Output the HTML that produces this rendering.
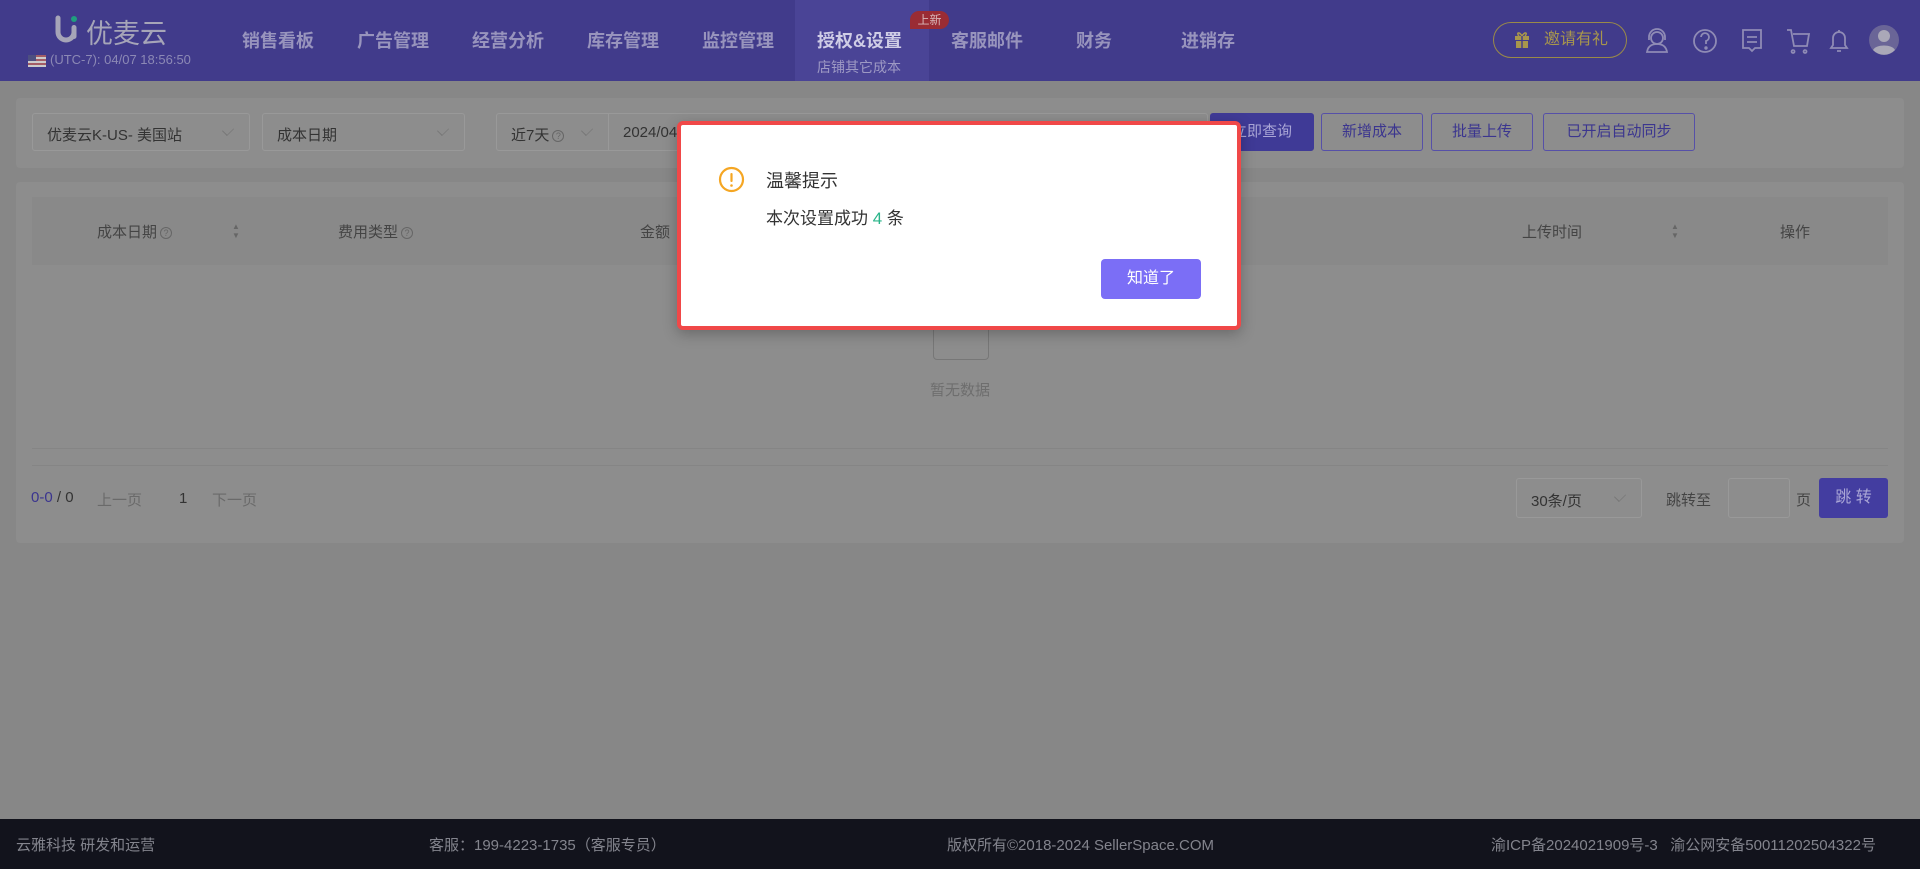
<!DOCTYPE html>
<html><head><meta charset="utf-8"><style>
*{box-sizing:border-box;margin:0;padding:0}
body{width:1920px;height:869px;overflow:hidden;background:#878787;font-family:"Liberation Sans","Noto Sans CJK SC",sans-serif;position:relative;color:#3a3a3a}
.abs{position:absolute}
.hdr{left:0;top:0;width:1920px;height:81px;background:#413b8b}
.nav{top:27px;font-size:18px;font-weight:bold;color:#9894bd;white-space:nowrap}
.card{background:#8d8d8d;border-radius:4px}
.sel{border:1px solid #999;border-radius:3px;height:38px;top:113px;font-size:15px;color:#333;padding:10px 14px 0;background:#8d8d8d}
.chev{position:absolute;right:16px;top:11px;width:10px;height:10px;border-right:1px solid #777;border-bottom:1px solid #777;transform:rotate(45deg) scaleX(.7)}
.btn{top:113px;height:38px;border:1px solid #5650a8;border-radius:3px;color:#3b358f;font-size:15px;text-align:center;line-height:36px}
.th{top:221px;font-size:15px;color:#444}
.q{display:inline-block;width:12px;height:12px;border:1px solid #666;border-radius:50%;font-size:9px;line-height:10px;text-align:center;color:#666;vertical-align:1px;margin-left:3px}
.ft{top:834px;font-size:15px;color:#83848d;white-space:nowrap}
</style></head><body>
<div class="abs hdr"></div>
<svg class="abs" style="left:54px;top:14px" width="28" height="30" viewBox="0 0 28 30"><path d="M4 4 V18 a8 8 0 0 0 16 0" stroke="#a6a5b8" stroke-width="5" fill="none" stroke-linecap="round"/><rect x="17.5" y="11" width="5" height="14" rx="2.5" fill="#a6a5b8"/><circle cx="20" cy="5" r="3" fill="#1f9e7e"/></svg>
<div class="abs" style="left:86px;top:12px;font-size:27px;color:#a6a5b8">优麦云</div>
<div class="abs" style="left:28px;top:55px;width:18px;height:12px;background:repeating-linear-gradient(#a35c66 0 2px,#ccc 2px 4px)"><div style="width:8px;height:6px;background:#4d4f80"></div></div>
<div class="abs" style="left:50px;top:52px;font-size:13px;color:#8c89b5">(UTC-7): 04/07 18:56:50</div>
<div class="abs nav" style="left:242px">销售看板</div>
<div class="abs nav" style="left:357px">广告管理</div>
<div class="abs nav" style="left:472px">经营分析</div>
<div class="abs nav" style="left:587px">库存管理</div>
<div class="abs nav" style="left:702px">监控管理</div>
<div class="abs" style="left:795px;top:0;width:134px;height:81px;background:#4a4496"></div>
<div class="abs nav" style="left:817px;color:#cfcde6">授权&amp;设置</div>
<div class="abs" style="left:817px;top:57px;font-size:14px;color:#9d99c4">店铺其它成本</div>
<div class="abs" style="left:910px;top:11px;width:39px;height:18px;background:#9a2c34;border-radius:9px 9px 9px 0;color:#d9b8b8;font-size:12px;text-align:center;line-height:18px">上新</div>
<div class="abs nav" style="left:951px">客服邮件</div>
<div class="abs nav" style="left:1076px">财务</div>
<div class="abs nav" style="left:1181px">进销存</div>
<div class="abs" style="left:1493px;top:22px;width:134px;height:36px;border:1px solid #9a8a48;border-radius:18px;color:#a8964c;font-size:16px;line-height:34px;padding-left:50px">邀请有礼</div>
<svg class="abs" style="left:1514px;top:31px" width="16" height="17" viewBox="0 0 16 17"><rect x="1" y="5" width="14" height="4" fill="#a8964c"/><rect x="2" y="10" width="12" height="7" fill="#a8964c"/><path d="M8 5 C5 0 2 2 5 5 M8 5 C11 0 14 2 11 5" stroke="#a8964c" stroke-width="1.5" fill="none"/><rect x="7.3" y="5" width="1.4" height="12" fill="#413b8b"/></svg>
<svg class="abs" style="left:1643px;top:26px" width="250" height="30" viewBox="0 0 250 30" fill="none" stroke="#8f8bb5" stroke-width="1.8">
<circle cx="14" cy="12" r="6"/><path d="M6 14 V11 a8 8 0 0 1 16 0 V14 M4 26 c1-6 5-8 10-8 s9 2 10 8 z"/>
<circle cx="62" cy="15" r="11"/><path d="M58 11 a4 4 0 1 1 5 4 v3" /><circle cx="63" cy="22" r="0.8" fill="#8f8bb5"/>
<path d="M100 4 h18 v18 h-6 l-3 3 l-3-3 h-6 z M104 11 h10 M104 16 h10"/>
<path d="M144 4 h4 l3 16 h13 l2-12 h-16 M150 24 a1.5 1.5 0 1 0 .1 0 M162 24 a1.5 1.5 0 1 0 .1 0"/>
<path d="M188 22 h16 l-2-3 v-7 a6 6 0 0 0-12 0 v7 z M194 25 h4 M196 4 v2"/>
</svg>
<svg class="abs" style="left:1869px;top:25px" width="30" height="30" viewBox="0 0 30 30"><circle cx="15" cy="15" r="15" fill="#6a6597"/><circle cx="15" cy="11" r="6" fill="#aaa8b8"/><path d="M4 25 c3-6 19-6 22 0 a15 15 0 0 1 -22 0z" fill="#aaa8b8"/></svg>

<div class="abs card" style="left:16px;top:98px;width:1888px;height:70px"></div>
<div class="abs sel" style="left:32px;width:218px">优麦云K-US- 美国站<span class="chev"></span></div>
<div class="abs sel" style="left:262px;width:203px">成本日期<span class="chev"></span></div>
<div class="abs sel" style="left:496px;width:113px;border-radius:3px 0 0 3px">近7天<span class="q">?</span><span class="chev"></span></div>
<div class="abs sel" style="left:608px;width:600px;border-radius:0 3px 3px 0">2024/04</div>
<div class="abs btn" style="left:1210px;width:104px;background:#3f3a96;color:#aaa6d6;border-color:#3f3a96">立即查询</div>
<div class="abs btn" style="left:1321px;width:102px">新增成本</div>
<div class="abs btn" style="left:1431px;width:102px">批量上传</div>
<div class="abs btn" style="left:1543px;width:152px">已开启自动同步</div>

<div class="abs card" style="left:16px;top:182px;width:1888px;height:361px"></div>
<div class="abs" style="left:32px;top:197px;width:1856px;height:68px;background:#898989"></div>
<div class="abs th" style="left:97px">成本日期<span class="q">?</span></div>
<div class="abs th" style="left:338px">费用类型<span class="q">?</span></div>
<div class="abs th" style="left:640px">金额</div>
<div class="abs th" style="left:1522px">上传时间</div>
<div class="abs th" style="left:1780px">操作</div>
<div class="abs" style="left:232px;top:222px;font-size:8px;line-height:9px;color:#666">▲<br>▼</div>
<div class="abs" style="left:1671px;top:222px;font-size:8px;line-height:9px;color:#666">▲<br>▼</div>
<div class="abs" style="left:933px;top:316px;width:56px;height:44px;border:1.5px solid #777;border-radius:4px"></div>
<div class="abs" style="left:930px;top:379px;width:60px;font-size:15px;color:#6e6e6e">暂无数据</div>
<div class="abs" style="left:32px;top:448px;width:1856px;height:1px;background:#858585"></div>
<div class="abs" style="left:32px;top:465px;width:1856px;height:1px;background:#858585"></div>
<div class="abs" style="left:31px;top:489px;font-size:15px;color:#3b358f">0-0 <span style="color:#333">/ 0</span></div>
<div class="abs" style="left:97px;top:489px;font-size:15px;color:#6a6a6a">上一页</div>
<div class="abs" style="left:179px;top:490px;font-size:15px;color:#333">1</div>
<div class="abs" style="left:212px;top:489px;font-size:15px;color:#6a6a6a">下一页</div>
<div class="abs sel" style="left:1516px;top:478px;width:126px;height:40px;padding-top:11px">30条/页<span class="chev" style="top:12px"></span></div>
<div class="abs" style="left:1666px;top:489px;font-size:15px;color:#444">跳转至</div>
<div class="abs" style="left:1728px;top:478px;width:62px;height:40px;border:1px solid #999;border-radius:3px"></div>
<div class="abs" style="left:1796px;top:489px;font-size:15px;color:#444">页</div>
<div class="abs" style="left:1819px;top:478px;width:69px;height:40px;background:#433da0;border-radius:3px;color:#aaa6d6;font-size:16px;text-align:center;line-height:40px">跳 转</div>

<div class="abs" style="left:0;top:819px;width:1920px;height:50px;background:#12131c"></div>
<div class="abs ft" style="left:16px">云雅科技 研发和运营</div>
<div class="abs ft" style="left:429px">客服：199-4223-1735（客服专员）</div>
<div class="abs ft" style="left:947px">版权所有©2018-2024 SellerSpace.COM</div>
<div class="abs ft" style="left:1491px">渝ICP备2024021909号-3 &nbsp; 渝公网安备50011202504322号</div>

<div class="abs" style="left:677px;top:121px;width:564px;height:209px;background:#fff;border:4px solid #f04848;border-radius:6px;box-shadow:0 4px 14px rgba(0,0,0,.25)"></div>
<svg class="abs" style="left:718px;top:166px" width="27" height="27" viewBox="0 0 27 27"><circle cx="13.5" cy="13.5" r="11.5" fill="none" stroke="#f5a623" stroke-width="2.2"/><rect x="12.4" y="7" width="2.2" height="9" rx="1" fill="#f5a623"/><circle cx="13.5" cy="19.5" r="1.3" fill="#f5a623"/></svg>
<div class="abs" style="left:766px;top:167px;font-size:18px;color:#333">温馨提示</div>
<div class="abs" style="left:766px;top:204px;font-size:17px;color:#333">本次设置成功 <span style="color:#2bb58a">4</span> 条</div>
<div class="abs" style="left:1101px;top:259px;width:100px;height:40px;background:#7b6ef6;border-radius:4px;color:#fff;font-size:16px;text-align:center;line-height:40px">知道了</div>
</body></html>
